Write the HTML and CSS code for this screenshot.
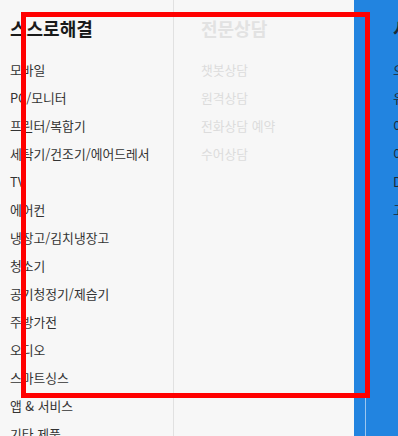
FILE: index.html
```html
<!DOCTYPE html>
<html lang="ko">
<head>
<meta charset="utf-8">
<link rel="stylesheet" href="styles.css">
</head>
<body>
<div class="menu">
  <section class="col col-self">
    <h2 class="title">스스로해결</h2>
    <ul class="list">
      <li>모바일</li>
      <li>PC/모니터</li>
      <li>프린터/복합기</li>
      <li>세탁기/건조기/에어드레서</li>
      <li>TV</li>
      <li>에어컨</li>
      <li>냉장고/김치냉장고</li>
      <li>청소기</li>
      <li>공기청정기/제습기</li>
      <li>주방가전</li>
      <li>오디오</li>
      <li>스마트싱스</li>
      <li>앱 &amp; 서비스</li>
      <li>기타 제품</li>
    </ul>
  </section>
  <section class="col col-expert">
    <h2 class="title">전문상담</h2>
    <ul class="list">
      <li>챗봇상담</li>
      <li>원격상담</li>
      <li>전화상담 예약</li>
      <li>수어상담</li>
    </ul>
  </section>
  <section class="col col-blue">
    <div class="blue-inner">
      <h2 class="title">서비스</h2>
      <ul class="list">
        <li>오류</li>
        <li>유지</li>
        <li>이용</li>
        <li>이전</li>
        <li>DIY</li>
        <li>고객</li>
      </ul>
    </div>
  </section>
</div>
<div class="highlight"></div>
</body>
</html>
```
FILE: styles.css
```css
html, body {
  margin: 0;
  padding: 0;
  width: 398px;
  height: 436px;
  overflow: hidden;
  background: #f7f7f7;
  font-family: "Noto Sans CJK KR", "Noto Sans", sans-serif;
}

.menu {
  display: flex;
  width: 398px;
  height: 436px;
  overflow: hidden;
}

.col {
  box-sizing: border-box;
  height: 100%;
}

.col-self {
  flex: 0 0 174px;
  padding-left: 10px;
  border-right: 1px solid #e1e1e1;
}

.col-expert {
  flex: 0 0 180px;
  padding-left: 27px;
}

.col-blue {
  flex: 1 1 auto;
  min-width: 0;
  overflow: hidden;
  background: #2284e0;
  padding-left: 11px;
}

.blue-inner {
  height: 100%;
  border-left: 1px solid #9cc6ef;
  padding-left: 27px;
  white-space: nowrap;
}

.title {
  margin: 16px 0 16px;
  font-size: 18px;
  line-height: 24px;
  font-weight: 700;
  color: #1a1a1a;
  white-space: nowrap;
}

.list {
  list-style: none;
  margin: 0;
  padding: 0;
}

.list li {
  font-size: 12.8px;
  line-height: 28px;
  color: #333;
  white-space: nowrap;
}

.col-expert .title {
  color: #e2e2e2;
}

.col-expert .list li {
  color: #dcdcdc;
}

.col-blue .title,
.col-blue .list li {
  color: #1b2a3a;
}

.highlight {
  position: absolute;
  left: 21px;
  top: 12px;
  width: 349px;
  height: 386px;
  box-sizing: border-box;
  border: 5px solid #ff0000;
}
```
